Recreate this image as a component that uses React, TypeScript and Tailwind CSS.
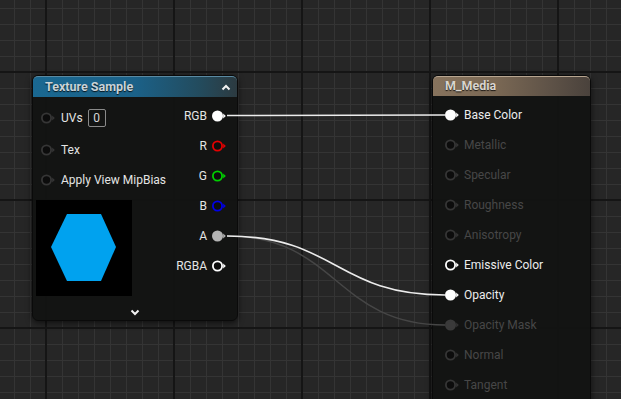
import React from "react";

type PinKind = "filled" | "hollow" | "dim" | "dimFilled";

function Pin({ kind, color = "#ffffff" }: { kind: PinKind; color?: string }) {
  let stroke = color;
  let fill = "#0d0d0d";
  let arrow = color;
  if (kind === "filled") {
    fill = color;
  } else if (kind === "dim") {
    stroke = "#363636";
    arrow = "#363636";
    fill = "#0c0c0c";
  } else if (kind === "dimFilled") {
    stroke = "#3a3a3a";
    arrow = "#333333";
    fill = "#3a3a3a";
  }
  return (
    <svg width="14" height="12" viewBox="0 0 14 12" className="shrink-0">
      <circle cx="5.5" cy="6" r="4.6" fill={fill} stroke={stroke} strokeWidth="1.8" />
      <polygon points="11.2,3.6 13.8,6 11.2,8.4" fill={arrow} />
    </svg>
  );
}

function Grid() {
  const W = 621;
  const H = 399;
  const minorX: number[] = [];
  for (let x = 14; x < W; x += 16) minorX.push(x);
  const minorY: number[] = [];
  for (let y = 8; y < H; y += 16) minorY.push(y);
  const majorX = [46, 174, 302, 430, 558];
  const majorY = [72, 200, 328];
  return (
    <svg className="absolute inset-0" width={W} height={H} viewBox={`0 0 ${W} ${H}`}>
      <rect width={W} height={H} fill="#262626" />
      {minorX.map((x) => (
        <line key={"vx" + x} x1={x + 0.5} y1={0} x2={x + 0.5} y2={H} stroke="#343434" strokeWidth="1" />
      ))}
      {minorY.map((y) => (
        <line key={"hy" + y} x1={0} y1={y + 0.5} x2={W} y2={y + 0.5} stroke="#343434" strokeWidth="1" />
      ))}
      {majorX.map((x) => (
        <line key={"mx" + x} x1={x} y1={0} x2={x} y2={H} stroke="#151515" strokeWidth="2" />
      ))}
      {majorY.map((y) => (
        <line key={"my" + y} x1={0} y1={y} x2={W} y2={y} stroke="#151515" strokeWidth="2" />
      ))}
    </svg>
  );
}

function ChevronUp() {
  return (
    <svg width="10" height="7" viewBox="0 0 10 7">
      <polyline points="1.5,5.5 5,2 8.5,5.5" fill="none" stroke="#f2f2f2" strokeWidth="2" />
    </svg>
  );
}

function ChevronDown() {
  return (
    <svg width="10" height="7" viewBox="0 0 10 7">
      <polyline points="1.5,1.5 5,5 8.5,1.5" fill="none" stroke="#f2f2f2" strokeWidth="2" />
    </svg>
  );
}

function InputRow({ label, h, children }: { label: string; h: string; children?: React.ReactNode }) {
  return (
    <div className={`flex items-center pl-[8px] ${h}`}>
      <Pin kind="dim" />
      <span className="ml-[6px] text-[12px] text-[#e4e4e4] leading-none">{label}</span>
      {children}
    </div>
  );
}

function OutRow({ label, kind, color }: { label: string; kind: PinKind; color: string }) {
  return (
    <div className="flex h-[30px] items-center justify-end gap-[5px] pr-[11px]">
      <span className="text-[12px] text-[#e4e4e4] leading-none">{label}</span>
      <Pin kind={kind} color={color} />
    </div>
  );
}

function TextureNode() {
  return (
    <div className="absolute left-[32px] top-[75px] w-[206px] h-[246px] flex flex-col rounded-[6px] border border-[#0a0a0a] bg-[#121312]/95 shadow-[0_2px_6px_rgba(0,0,0,0.6)]">
      <div className="flex h-[21px] items-center justify-between rounded-t-[5px] border-t border-[#5a8aa2] bg-[linear-gradient(to_right,#1a6891,#1b6188_50%,#234b5d_82%,#2c3a40)] pl-[12px] pr-[6px]">
        <span className="text-[12.5px] font-bold text-[#c9d3d8] leading-none [text-shadow:0_1px_1px_rgba(0,0,0,0.8)]">
          Texture Sample
        </span>
        <ChevronUp />
      </div>
      <div className="flex justify-between">
        <div className="flex flex-col pt-[5px]">
          <InputRow label="UVs" h="h-[32px]">
            <div className="ml-[5px] flex h-[18px] w-[18px] items-center justify-center rounded-[2px] border border-[#8a8a8a] text-[12px] text-[#d6d6d6] leading-none">
              0
            </div>
          </InputRow>
          <InputRow label="Tex" h="h-[32px]" />
          <InputRow label="Apply View MipBias" h="h-[28px]" />
          <div className="ml-[3px] mt-[6px] h-[96px] w-[96px] bg-black">
            <svg width="96" height="96" viewBox="0 0 96 96">
              <polygon points="15,47 31,14 65,14 80,47 65,81 31,81" fill="#00a2ef" />
            </svg>
          </div>
        </div>
        <div className="flex flex-col pt-[4px]">
          <OutRow label="RGB" kind="filled" color="#ffffff" />
          <OutRow label="R" kind="hollow" color="#e40000" />
          <OutRow label="G" kind="hollow" color="#00d000" />
          <OutRow label="B" kind="hollow" color="#0000e8" />
          <OutRow label="A" kind="filled" color="#b4b4b4" />
          <OutRow label="RGBA" kind="hollow" color="#ffffff" />
        </div>
      </div>
      <div className="flex justify-center pt-[13px]">
        <ChevronDown />
      </div>
    </div>
  );
}

function MatRow({ label, kind }: { label: string; kind: PinKind }) {
  const active = kind === "filled" || kind === "hollow";
  return (
    <div className="flex h-[30px] items-center gap-[5px] pl-[12px]">
      <Pin kind={kind} color="#ffffff" />
      <span className={`text-[12px] leading-none ${active ? "text-[#ececec]" : "text-[#474747]"}`}>{label}</span>
    </div>
  );
}

function MaterialNode() {
  return (
    <div className="absolute left-[432px] top-[75px] w-[159px] h-[340px] flex flex-col rounded-[6px] border border-[#0a0a0a] bg-[#121312]/95 shadow-[0_2px_6px_rgba(0,0,0,0.6)]">
      <div className="flex h-[20px] items-center rounded-t-[5px] border-t border-[#b7a590] bg-[linear-gradient(to_right,#87735d,#7a6854_40%,#5e5247_75%,#4a423c)] pl-[12px]">
        <span className="text-[12.5px] font-bold text-[#d9d4ce] leading-none [text-shadow:0_1px_1px_rgba(0,0,0,0.8)]">
          M_Media
        </span>
      </div>
      <div className="flex flex-col pt-[4px]">
        <MatRow label="Base Color" kind="filled" />
        <MatRow label="Metallic" kind="dim" />
        <MatRow label="Specular" kind="dim" />
        <MatRow label="Roughness" kind="dim" />
        <MatRow label="Anisotropy" kind="dim" />
        <MatRow label="Emissive Color" kind="hollow" />
        <MatRow label="Opacity" kind="filled" />
        <MatRow label="Opacity Mask" kind="dimFilled" />
        <MatRow label="Normal" kind="dim" />
        <MatRow label="Tangent" kind="dim" />
      </div>
    </div>
  );
}

function Wires() {
  return (
    <svg className="pointer-events-none absolute inset-0" width="621" height="399" viewBox="0 0 621 399">
      <path d="M227 236 C337 236 335 325 445 325" fill="none" stroke="#464646" strokeWidth="1.5" />
      <path d="M227 115.5 L445 115" fill="none" stroke="#ececec" strokeWidth="1.6" />
      <path d="M227 236 C337 236 335 295 445 295" fill="none" stroke="#ececec" strokeWidth="1.6" />
    </svg>
  );
}

export default function App() {
  return (
    <div className="relative h-[399px] w-[621px] overflow-hidden bg-[#262626] font-['Roboto',sans-serif]">
      <Grid />
      <TextureNode />
      <MaterialNode />
      <Wires />
    </div>
  );
}
